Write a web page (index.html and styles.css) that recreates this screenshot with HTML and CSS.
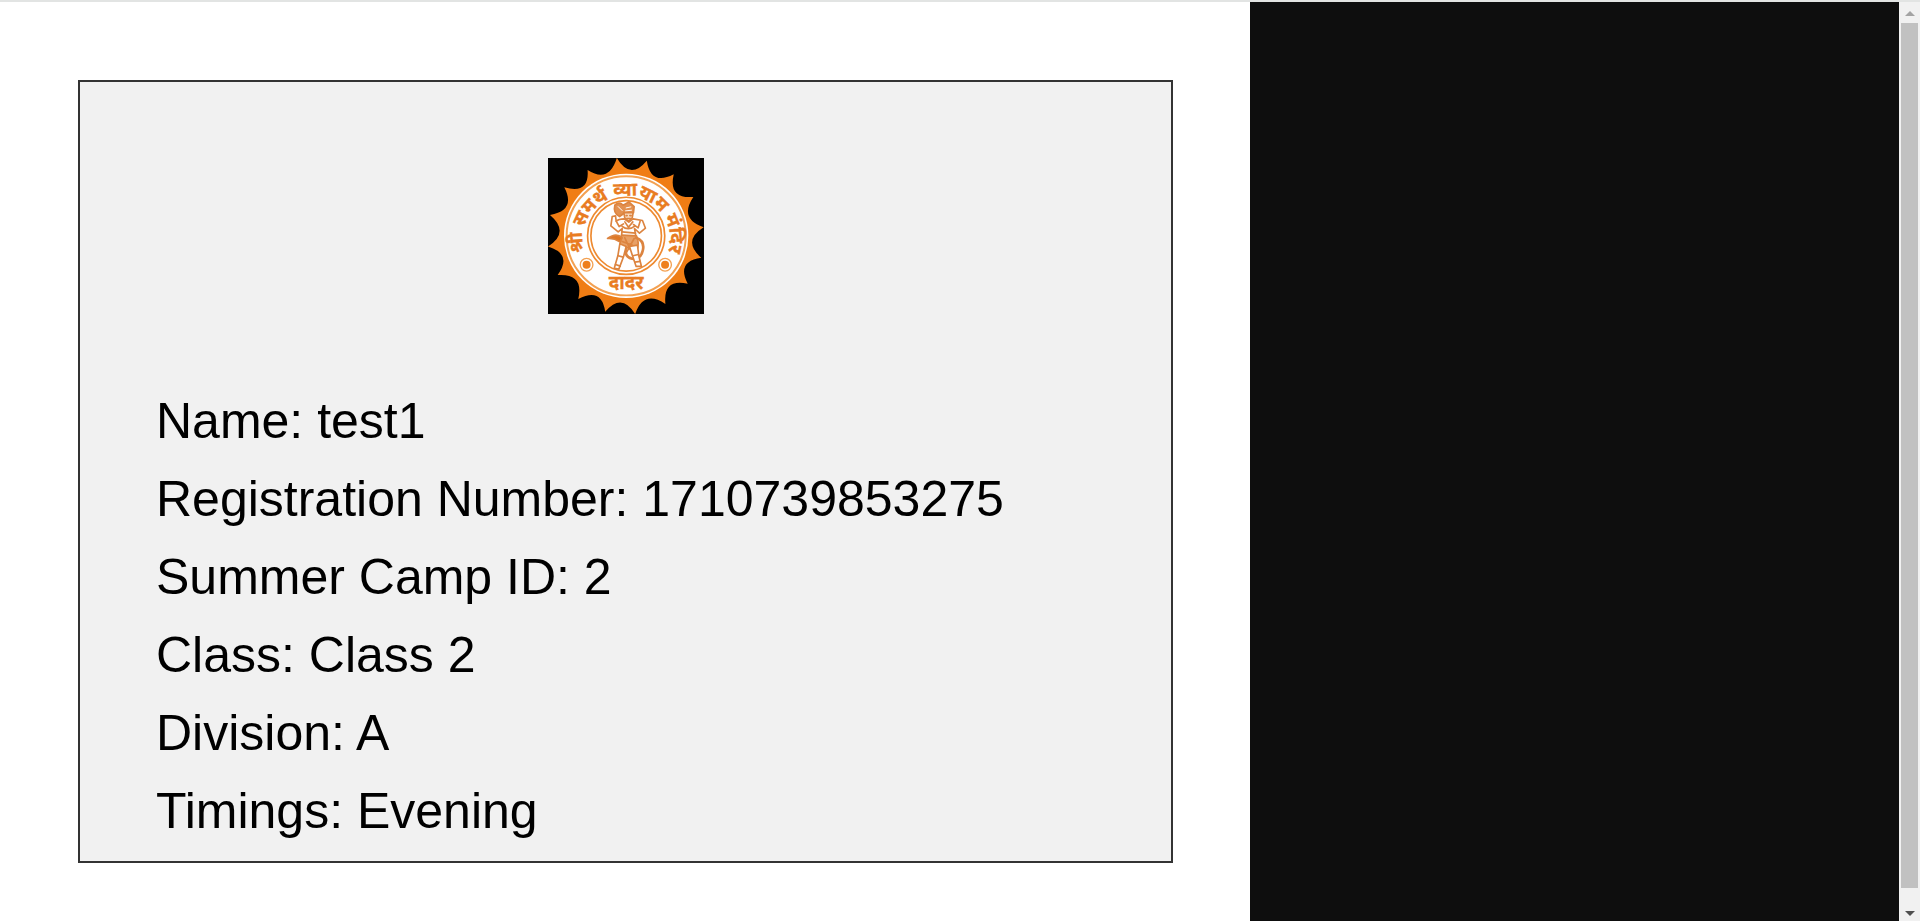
FILE: index.html
```html
<!DOCTYPE html>
<html lang="en">
<head>
<meta charset="utf-8">
<title>Summer Camp ID Card</title>
<link rel="stylesheet" href="styles.css">
</head>
<body>
<div class="viewer">
  <main class="sheet">
    <section class="card">
      <svg class="logo" viewBox="21 24 469 469" role="img" aria-label="Shree Samarth Vyayam Mandir, Dadar">
        <defs>
          <path id="ring-text" d="M150 348A132 132 0 1 1 362 348"/>
        </defs>
        <rect x="21" y="24" width="469" height="469" fill="#000"/>
        <path fill="#f07d14" d="M228 24Q268 92 318 32Q330 109 399 73Q382 148 458 141Q414 206 489 232Q423 273 482 324Q406 335 441 402Q366 386 374 463Q309 419 283 493Q243 427 193 486Q182 411 112 448Q130 370 50 376Q96 313 21 290Q88 247 27 195Q106 182 70 112Q146 134 140 60Q204 101 228 24Z"/>
        <circle cx="256" cy="258" r="187" fill="#fff"/>
        <circle cx="256" cy="258" r="179" fill="#fff" stroke="#f3a152" stroke-width="6"/>
        <circle cx="256" cy="258" r="116" fill="none" stroke="#ee8a30" stroke-width="5"/>
        <circle cx="256" cy="258" r="106" fill="none" stroke="#ee8a30" stroke-width="5"/>
        <g fill="none" stroke="#f3a152" stroke-width="4">
          <circle cx="137" cy="345" r="19"/><circle cx="373" cy="345" r="19"/>
        </g>
        <circle cx="137" cy="345" r="12" fill="#ee7f1c"/>
        <circle cx="373" cy="345" r="12" fill="#ee7f1c"/>
        <text class="logo-text"><textPath href="#ring-text" startOffset="50%">श्री समर्थ व्यायाम मंदिर</textPath></text>
        <text class="logo-text" x="256" y="417">दादर</text>
        <g fill="none" stroke="#dc8440" stroke-width="5" stroke-linejoin="round" stroke-linecap="round">
          <path fill="#e39150" d="M222 166Q235 154 247 166L264 156L280 170L278 188L250 190L236 200Q216 190 222 166Z"/>
          <path stroke="#fff" stroke-width="3" d="M232 170L244 182M256 174L270 171M254 183L272 181"/>
          <path fill="#f7d9bd" d="M249 188H277L274 205L263 214L252 205Z"/>
          <path d="M256 197H259M267 197H271M258 206H269"/>
          <path fill="#fff" d="M250 207Q233 207 226 214L224 198L214 200L210 228L232 246L244 236L242 262L286 264L281 236L296 250L314 235L305 212L277 207L264 217Z"/>
          <path d="M226 214L235 230L248 222M298 214L292 234L278 224M244 230Q263 244 283 228M252 216L263 232L276 216M244 246L284 250"/>
          <path fill="#e8a066" d="M242 256L287 258Q297 280 288 302L266 290L246 302L237 286Z"/>
          <path fill="#df7825" d="M200 266Q226 247 244 264L237 276Q219 264 200 266Z"/>
          <path stroke-width="8" d="M286 264Q313 274 306 302Q300 329 274 327Q252 322 255 301"/>
          <path fill="#fff" d="M237 282L231 318L220 356L234 358L248 321L256 290ZM266 290L275 318L286 350L302 350L294 318L290 286Z"/>
          <path d="M244 275L274 286M252 264L268 299M280 266L258 306M232 318L247 322M276 318L293 314M224 344L238 349M282 337L298 335"/>
        </g>
      </svg>
      <div class="details">
        <p>Name: test1</p>
        <p>Registration Number: 1710739853275</p>
        <p>Summer Camp ID: 2</p>
        <p>Class: Class 2</p>
        <p>Division: A</p>
        <p>Timings: Evening</p>
      </div>
    </section>
  </main>
  <div class="backdrop"></div>
  <div class="scrollbar" aria-hidden="true">
    <svg class="arrow" viewBox="0 0 10 5"><path fill="#a3a3a3" d="M0 5L5 0L10 5Z"/></svg>
    <div class="thumb"></div>
    <svg class="arrow" viewBox="0 0 10 5"><path fill="#505050" d="M0 0L5 5L10 0Z"/></svg>
  </div>
</div>
</body>
</html>
```
FILE: styles.css
```css
* {
  box-sizing: border-box;
}

body {
  margin: 0;
  background: #fff;
  color: #000;
  font-family: "Liberation Sans", Arial, sans-serif;
}

.viewer {
  display: grid;
  grid-template-columns: minmax(0, 1250fr) minmax(0, 649fr) 21px;
  min-height: 100vh;
  border-top: 2px solid #e2e4e3;
}

.sheet {
  padding: 78px 77px 40px 78px;
}

.card {
  display: flex;
  flex-direction: column;
  gap: 68px;
  padding: 76px 76px 11px;
  border: 2px solid #333;
  background: #f1f1f1;
}

.logo {
  width: 156px;
  height: 156px;
  align-self: center;
}

.logo-text {
  font-family: "Noto Sans Devanagari", "Noto Sans", sans-serif;
  font-size: 56px;
  font-weight: 700;
  fill: #e97c22;
  stroke: #e97c22;
  stroke-width: 1px;
  text-anchor: middle;
}

.details p {
  margin: 0;
  font-size: 50px;
  line-height: 78px;
}

.backdrop {
  background: #0e0e0e;
}

.scrollbar {
  display: flex;
  flex-direction: column;
  align-items: center;
  gap: 7px;
  padding: 9px 0 5px;
  background: #f1f1f1;
}

.thumb {
  flex: 1;
  width: 17px;
  margin-bottom: 16px;
  background: #c1c1c1;
}

.arrow {
  width: 10px;
  height: 5px;
}
```
